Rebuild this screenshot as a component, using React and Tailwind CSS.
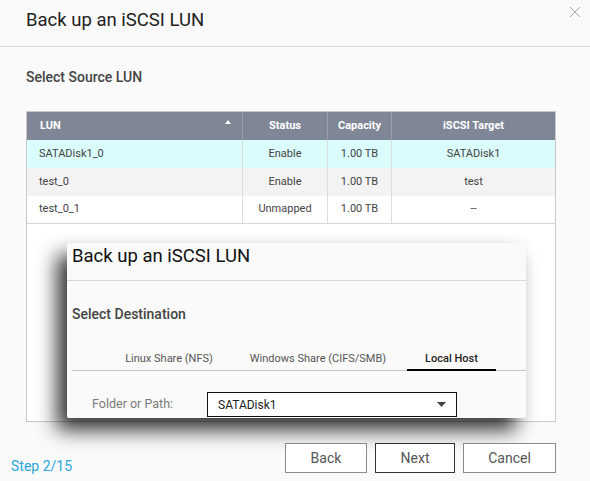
export default function App() {
  const rows = [
    { lun: "SATADisk1_0", status: "Enable", cap: "1.00 TB", target: "SATADisk1", bg: "bg-[#dafcfc]" },
    { lun: "test_0", status: "Enable", cap: "1.00 TB", target: "test", bg: "bg-[#f3f3f3]" },
    { lun: "test_0_1", status: "Unmapped", cap: "1.00 TB", target: "--", bg: "bg-white" },
  ];
  return (
    <div className="w-[590px] h-[481px] bg-[#fafafa] overflow-hidden relative" style={{ fontFamily: "Roboto, 'Liberation Sans', sans-serif" }}>
      <svg className="absolute left-[569px] top-[6px]" width="12" height="12" viewBox="0 0 12 12">
        <path d="M1 1L11 11M11 1L1 11" stroke="#a8a8a8" strokeWidth="1" />
      </svg>
      <div className="h-[47px] border-b border-[#dcdcdc] pl-[26px] pt-[8px]">
        <div className="text-[18.5px] leading-[24px] text-[#222]">Back up an iSCSI LUN</div>
      </div>
      <div className="pl-[26px] pt-[21px] h-[64px]">
        <div className="text-[14px] leading-[18px] font-medium text-[#444]">Select Source LUN</div>
      </div>
      <div className="ml-[26px] w-[530px] h-[311px] border border-[#c8c8c8] bg-white flex flex-col">
        <div className="flex h-[28px] bg-[#7f8797] text-white text-[11px] font-bold">
          <div className="w-[216px] pl-[13px] flex items-center relative border-r border-[#9aa1ae]">
            LUN
            <svg className="absolute right-[11px] top-[8px]" width="6" height="4" viewBox="0 0 6 4"><path d="M3 0L6 4H0Z" fill="#fff" /></svg>
          </div>
          <div className="w-[85px] flex items-center justify-center border-r border-[#9aa1ae]">Status</div>
          <div className="w-[64px] flex items-center justify-center border-r border-[#9aa1ae]">Capacity</div>
          <div className="flex-1 flex items-center justify-center">iSCSI Target</div>
        </div>
        {rows.map((r, i) => (
          <div key={i} className={`flex h-[28px] text-[11px] text-[#444] ${r.bg} ${i === 2 ? "border-b border-[#d4d4d4]" : ""}`}>
            <div className="w-[216px] pl-[12px] flex items-center border-r border-[#dddddd]">{r.lun}</div>
            <div className="w-[85px] flex items-center justify-center border-r border-[#dddddd]">{r.status}</div>
            <div className="w-[64px] flex items-center justify-center border-r border-[#dddddd]">{r.cap}</div>
            <div className="flex-1 flex items-center justify-center">{r.target}</div>
          </div>
        ))}
        <div className="ml-[40px] mt-[19px] w-[459px] h-[175px] bg-[#fafafa] rounded-[2px] shadow-[-10px_12px_20px_rgba(0,0,0,0.8)] flex flex-col">
          <div className="h-[38px] border-b border-[#d6d6d6] pl-[5px] pt-[1px]">
            <div className="text-[18.5px] leading-[24px] text-[#111]">Back up an iSCSI LUN</div>
          </div>
          <div className="pl-[5px] pt-[24px] h-[68px]">
            <div className="text-[14px] leading-[18px] font-medium text-[#444]">Select Destination</div>
          </div>
          <div className="ml-[5px] flex h-[22px] border-b border-[#c4c4c4] text-[11px] text-[#555] pt-[2px]">
            <div className="ml-[53px] w-[88px] text-center">Linux Share (NFS)</div>
            <div className="ml-[35px] w-[140px] text-center">Windows Share (CIFS/SMB)</div>
            <div className="ml-[19px] w-[89px] text-center text-[#222] font-medium border-b-2 border-black h-[20px]">Local Host</div>
          </div>
          <div className="flex items-center mt-[21px] pl-[25px]">
            <div className="w-[115px] text-[12.5px] text-[#7a7a7a]">Folder or Path:</div>
            <div className="w-[250px] h-[25px] border border-[#111] bg-white flex items-center justify-between px-[10px]">
              <span className="text-[12px] text-[#222]">SATADisk1</span>
              <svg width="9" height="5" viewBox="0 0 9 5"><path d="M0 0H9L4.5 5Z" fill="#444" /></svg>
            </div>
          </div>
        </div>
      </div>
      <div className="flex items-end mt-[21px] h-[30px]">
        <div className="pl-[11px] text-[14px] text-[#29a5da] leading-[18px] mb-[-2px]">Step 2/15</div>
        <div className="ml-auto mr-[34px] flex gap-[8px]">
          <button className="w-[82px] h-[30px] border border-[#8a8a8a] bg-white text-[14px] text-[#555]">Back</button>
          <button className="w-[80px] h-[30px] border border-[#333] bg-white text-[14px] text-[#555]">Next</button>
          <button className="w-[93px] h-[30px] border border-[#8a8a8a] bg-white text-[14px] text-[#555]">Cancel</button>
        </div>
      </div>
    </div>
  );
}
